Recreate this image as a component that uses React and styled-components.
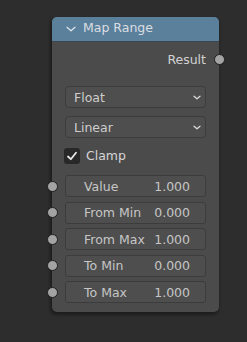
import React from 'react'
import styled, { createGlobalStyle } from 'styled-components'

const GlobalStyle = createGlobalStyle`
    html, body {
        margin: 0;
        padding: 0;
        background-color: #2d2d2d;
    }
    body {
        font-family: "DejaVu Sans", "Liberation Sans", sans-serif;
        font-size: 12.5px;
    }
`;

const Page = styled.div`
    width: 247px;
    height: 342px;
    box-sizing: border-box;
    padding: 17px 0 0 52px;
    overflow: hidden;
`;

const Node = styled.div`
    width: 167px;
    background-color: #4b4b4b;
    border-radius: 5px;
    box-shadow: -1px 2px 3px 1px rgba(0, 0, 0, 0.35);
    padding-bottom: 9px;
`;

const Header = styled.div`
    height: 24px;
    display: flex;
    align-items: center;
    gap: 7px;
    padding-left: 14px;
    background-color: #5b809b;
    border-radius: 5px 5px 0 0;
    border-bottom: 1px solid #3a4650;
    color: #d9dee3;
`;

const Title = styled.span`
    line-height: 1;
    margin-top: -1px;
`;

const OutputRow = styled.div`
    position: relative;
    height: 22px;
    margin-top: 6px;
    display: flex;
    align-items: center;
    justify-content: flex-end;
    padding-right: 13px;
    color: #d2d2d2;
`;

const Socket = styled.span`
    position: absolute;
    top: 50%;
    ${p => (p.$side === 'right' ? 'right: -5.5px;' : 'left: -5.5px;')}
    width: 9px;
    height: 9px;
    margin-top: -5.5px;
    border-radius: 50%;
    background-color: #a3a3a3;
    border: 1px solid #1e1e1e;
`;

const Dropdown = styled.div`
    height: 22px;
    margin: ${p => p.$top}px 13px 0;
    box-sizing: border-box;
    border: 1px solid #3c3c3c;
    border-radius: 4px;
    background-color: #4e4e4e;
    display: flex;
    align-items: center;
    justify-content: space-between;
    padding: 0 4px 0 8px;
    color: #cdcdcd;
`;

const CheckRow = styled.label`
    height: 17px;
    margin: 9px 13px 0 12px;
    display: flex;
    align-items: center;
    gap: 6px;
    color: #d6d6d6;
`;

const CheckBox = styled.span`
    width: 16px;
    height: 16px;
    border-radius: 3px;
    background-color: #282828;
    display: flex;
    align-items: center;
    justify-content: center;
`;

const Inputs = styled.div`
    margin-top: 11px;
    display: flex;
    flex-direction: column;
    gap: 4.5px;
`;

const InputRow = styled.div`
    position: relative;
    padding: 0 13px;
`;

const Field = styled.div`
    height: 22px;
    box-sizing: border-box;
    border: 1px solid #3c3c3c;
    border-radius: 3px;
    background-color: #4e4e4e;
    display: flex;
    align-items: center;
    justify-content: space-between;
    padding: 0 15px 0 18px;
    color: #c6c6c6;
`;

const Chevron = ({ w = 8, h = 6, color = '#e0e0e0' }) => (
    <svg width={w} height={h} viewBox={`0 0 ${w} ${h}`}>
        <path d={`M1 1.2 L${w / 2} ${h - 1.2} L${w - 1} 1.2`} fill="none" stroke={color} strokeWidth="1.2" strokeLinecap="round" strokeLinejoin="round" />
    </svg>
);

const inputs = [
    { label: 'Value', value: '1.000' },
    { label: 'From Min', value: '0.000' },
    { label: 'From Max', value: '1.000' },
    { label: 'To Min', value: '0.000' },
    { label: 'To Max', value: '1.000' },
];

export default function App() {
    return (
        <Page>
            <GlobalStyle />
            <Node>
                <Header>
                    <Chevron w={10} h={6} color="#dfe6ec" />
                    <Title>Map Range</Title>
                </Header>
                <OutputRow>
                    Result
                    <Socket $side="right" />
                </OutputRow>
                <Dropdown $top={16}>
                    Float
                    <Chevron w={8} h={5} />
                </Dropdown>
                <Dropdown $top={8}>
                    Linear
                    <Chevron w={8} h={5} />
                </Dropdown>
                <CheckRow>
                    <CheckBox>
                        <svg width="12" height="12" viewBox="0 0 12 12">
                            <path d="M2 6.5 L4.8 9.2 L10 2.8" fill="none" stroke="#e8e8e8" strokeWidth="1.8" strokeLinecap="round" strokeLinejoin="round" />
                        </svg>
                    </CheckBox>
                    Clamp
                </CheckRow>
                <Inputs>
                    {inputs.map(item => (
                        <InputRow key={item.label}>
                            <Socket />
                            <Field>
                                <span>{item.label}</span>
                                <span>{item.value}</span>
                            </Field>
                        </InputRow>
                    ))}
                </Inputs>
            </Node>
        </Page>
    )
}
